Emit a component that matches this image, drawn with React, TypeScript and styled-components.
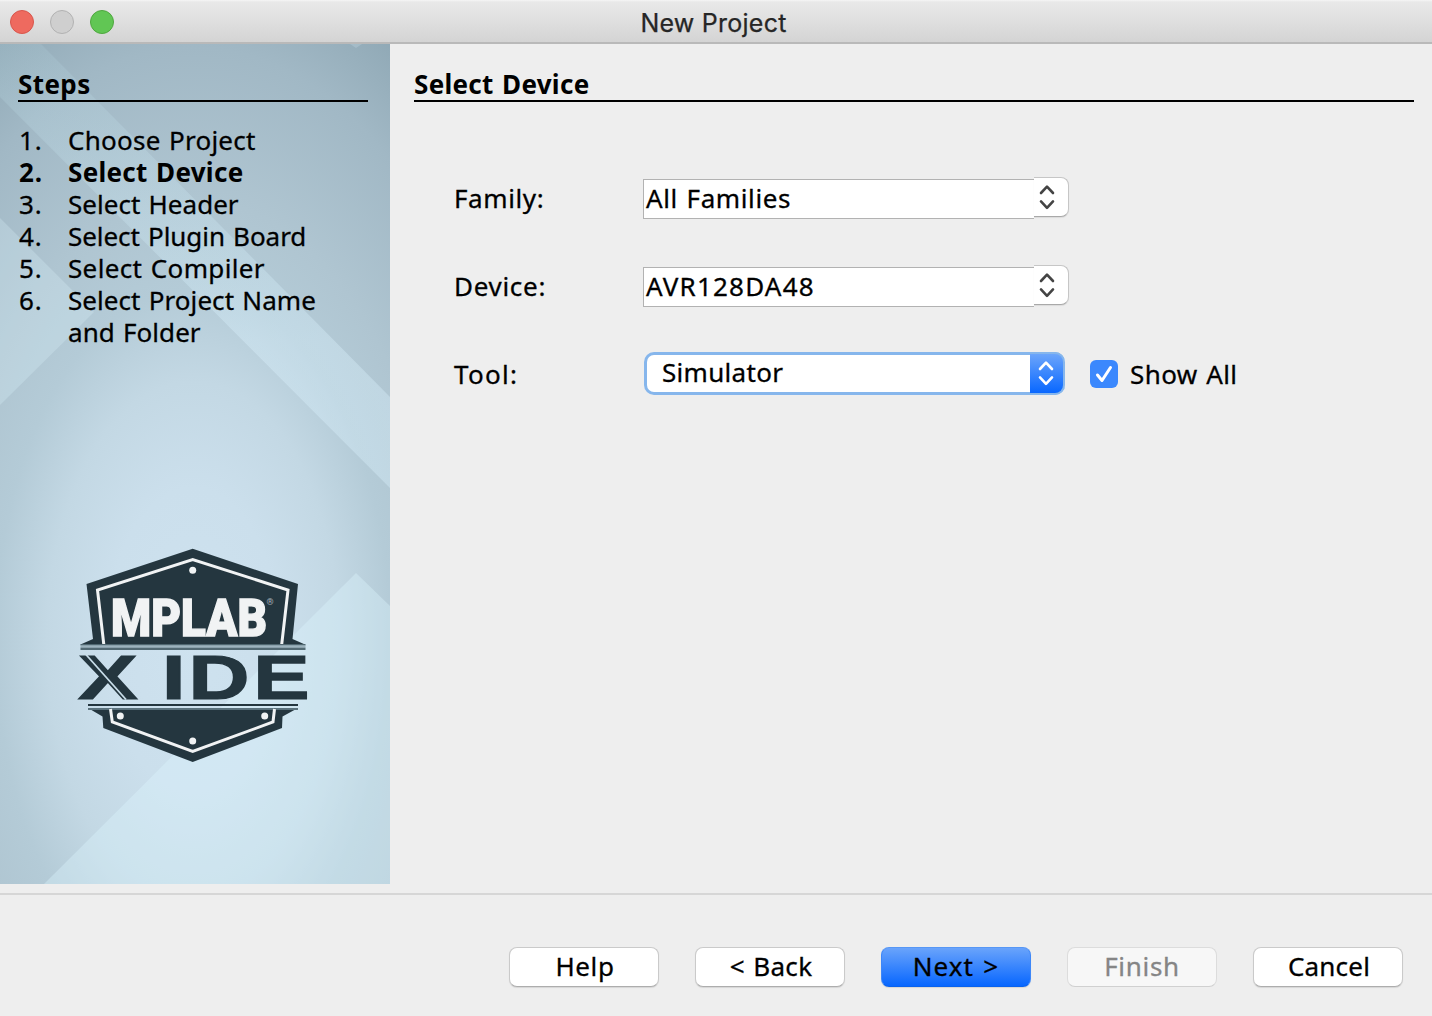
import React from "react";
import styled, { createGlobalStyle, css } from "styled-components";

const GlobalStyle = createGlobalStyle`
  * { box-sizing: border-box; }
  body {
    margin: 0;
    background: #eeeeee;
    color: #000;
    font-family: "Noto Sans", "Open Sans", sans-serif;
    font-size: 26px;
    line-height: 32px;
  }
`;

const Window = styled.div`
  width: 1432px;
  height: 1016px;
  display: flex;
  flex-direction: column;
  overflow: hidden;
  isolation: isolate;
  background: #eeeeee;
`;

const TitleBar = styled.header`
  height: 44px;
  flex: none;
  display: grid;
  grid-template-columns: 200px 1fr 200px;
  align-items: center;
  background: linear-gradient(#f6f6f6 0, #e9e9e9 2px, #d4d4d4 42px);
  border-bottom: 2px solid #b9b9b9;
`;

const Lights = styled.div`
  display: flex;
  gap: 16px;
  padding: 2px 0 0 10px;
`;

const Light = styled.span<{ $fill: string; $edge: string }>`
  width: 24px;
  height: 24px;
  border-radius: 50%;
  background: ${(p) => p.$fill};
  border: 1px solid ${(p) => p.$edge};
`;

const WindowTitle = styled.h1`
  margin: 0;
  padding: 3px 5px 0 0;
  text-align: center;
  font: 400 25px/32px Inter, Roboto, sans-serif;
  letter-spacing: 0.25px;
  -webkit-text-stroke: 0.25px currentColor;
  color: #262626;
`;

const Body = styled.main`
  display: flex;
  height: 840px;
  flex: none;
`;

const Sidebar = styled.aside`
  position: relative;
  width: 390px;
  padding: 24px 22px 0 18px;
`;

const Backdrop = styled.svg`
  position: absolute;
  inset: 0;
  z-index: -1;
`;

const Heading = styled.h2<{ $spacing: number }>`
  margin: 0;
  height: 34px;
  font-size: 26px;
  line-height: 32px;
  font-weight: 700;
  border-bottom: 2px solid #000;
  letter-spacing: ${(p) => p.$spacing}px;
  word-spacing: 1.4px;
`;

const StepList = styled.ol`
  list-style: none;
  margin: 22px 0 0;
  padding: 0;
`;

const Step = styled.li<{ $current?: boolean }>`
  display: grid;
  grid-template-columns: 50px 1fr;
  font-weight: ${(p) => (p.$current ? 700 : 400)};
  -webkit-text-stroke: ${(p) => (p.$current ? 0 : 0.3)}px currentColor;
`;

const StepNumber = styled.span`
  padding-left: 1px;
  letter-spacing: 0.8px;
`;

const Label = styled.span<{ $spacing: number }>`
  display: block;
  white-space: nowrap;
  letter-spacing: ${(p) => p.$spacing}px;
  word-spacing: 1.4px;
`;

const Badge = styled.svg`
  display: block;
  margin: 187px 0 0 42px;
`;

const Panel = styled.section`
  flex: 1;
  padding: 24px 18px 0 24px;
`;

const Form = styled.div`
  padding: 74px 0 0 39px;
  -webkit-text-stroke: 0.3px currentColor;
`;

const FormRow = styled.div`
  height: 88px;
  display: grid;
  grid-template-columns: 190px 447px auto;
  align-items: start;
`;

const FieldName = styled.div`
  padding: 6px 0 0 1px;
`;

const Editable = styled.div`
  display: flex;
  align-items: flex-start;
  padding-top: 1px;
`;

const EditableValue = styled.div`
  width: 391px;
  height: 40px;
  margin-top: 2px;
  padding: 2px 0 0 2px;
  background: #fff;
  border: 1px solid #b2b2b2;
  border-right: 0;
`;

const Stepper = styled.div`
  width: 35px;
  height: 40px;
  display: flex;
  align-items: center;
  padding-left: 4px;
  background: #fff;
  border: 1px solid #c6c6c6;
  border-left: 0;
  border-bottom-color: #a9a9a9;
  border-radius: 0 8px 8px 0;
  box-shadow: 0 1px 1px rgba(0, 0, 0, 0.08);
`;

const Popup = styled.div`
  width: 421px;
  height: 43px;
  margin-left: 1px;
  display: flex;
  background: #fff;
  border: 3px solid #86b6ec;
  border-right: 0;
  border-radius: 10px;
`;

const PopupValue = styled.div`
  flex: 1;
  padding: 1px 0 0 15px;
`;

const PopupArrow = styled.div`
  width: 35px;
  height: 43px;
  margin-top: -3px;
  display: flex;
  align-items: center;
  padding: 0 0 1px 7px;
  background: linear-gradient(#6ca5fb, #0867ff);
  border: solid #86b6ec;
  border-width: 2px 2px 2px 0;
  border-radius: 0 10px 10px 0;
`;

const CheckRow = styled.label`
  display: flex;
  gap: 12px;
  padding-top: 6px;
`;

const CheckBox = styled.span`
  width: 28px;
  height: 28px;
  margin-top: 2px;
  border-radius: 6px;
  background: #3b88fd;
  display: block;
`;

const Footer = styled.footer`
  margin-top: 9px;
  height: 123px;
  border-top: 2px solid #d6d6d6;
  padding: 52px 29px 0 0;
  display: flex;
  justify-content: flex-end;
  gap: 36px;
`;

const Button = styled.button<{ $tone?: "primary" | "disabled"; $spacing: number }>`
  width: 150px;
  height: 40px;
  padding: 0 0 1px 2px;
  font: inherit;
  line-height: 37px;
  letter-spacing: ${(p) => p.$spacing}px;
  word-spacing: 1.4px;
  -webkit-text-stroke: 0.3px currentColor;
  color: #000;
  background: #fff;
  border: 1px solid #cacaca;
  border-bottom-color: #adadad;
  border-radius: 8px;
  box-shadow: 0 1px 1px rgba(0, 0, 0, 0.1);
  ${(p) =>
    p.$tone === "primary" &&
    css`
      padding-left: 0;
      background: linear-gradient(#6ca5fb, #0565ff) border-box;
      border-color: #5797f5 #3d87f8 #0a62ed;
    `}
  ${(p) =>
    p.$tone === "disabled" &&
    css`
      padding-left: 0;
      background: #f7f7f7;
      color: #858585;
      border-color: #dcdcdc #dcdcdc #d0d0d0;
      box-shadow: none;
    `}
`;

const steps = [
  { lines: ["Choose Project"], spacing: [0.25] },
  { lines: ["Select Device"], spacing: [0.3], current: true },
  { lines: ["Select Header"], spacing: [0.03] },
  { lines: ["Select Plugin Board"], spacing: [-0.05] },
  { lines: ["Select Compiler"], spacing: [0.35] },
  { lines: ["Select Project Name", "and Folder"], spacing: [0.06, 0.05] },
];

function Chevrons({ color }: { color: string }) {
  return (
    <svg width="18" height="28" viewBox="0 0 18 28" fill="none" stroke={color} strokeWidth="2.6" strokeLinecap="round" strokeLinejoin="round">
      <path d="M3 10 L9 3.6 L15 10 M3 18.4 L9 24.8 L15 18.4" />
    </svg>
  );
}

function SidebarBackdrop() {
  return (
    <Backdrop width="390" height="840" viewBox="0 44 390 840" aria-hidden>
      <defs>
        <radialGradient id="glow" gradientUnits="userSpaceOnUse" cx="0" cy="0" r="1" gradientTransform="translate(193 640) scale(430 760)">
          <stop offset="0" stopColor="#cee2ef" />
          <stop offset="0.2" stopColor="#cbdfec" />
          <stop offset="0.34" stopColor="#c3d8e4" />
          <stop offset="0.46" stopColor="#b4cbd7" />
          <stop offset="0.58" stopColor="#afc5d1" />
          <stop offset="0.78" stopColor="#a1b8c5" />
          <stop offset="0.92" stopColor="#8fa8b5" />
        </radialGradient>
        <linearGradient id="beam" gradientUnits="userSpaceOnUse" x1="0" y1="44" x2="0" y2="340">
          <stop offset="0" stopColor="#c8ecf5" stopOpacity="0.12" />
          <stop offset="1" stopColor="#dcf3ff" stopOpacity="0.36" />
        </linearGradient>
      </defs>
      <rect y="44" width="390" height="840" fill="url(#glow)" />
      <path fill="url(#beam)" d="M0 44H41L390 397V488L0 97Z" />
      <g fill="#dff6ff">
        <path fillOpacity="0.25" d="M0 218L94 312L0 405Z" />
        <path fillOpacity="0.36" d="M356 573L390 606V884H44Z" />
        <path fillOpacity="0.2" d="M350 44L356 48L362 44Z" />
      </g>
    </Backdrop>
  );
}

function MplabBadge() {
  const ink = "#24363f";
  return (
    <Badge width="270" height="240" viewBox="0 0 270 240">
      <path fill={ink} d="M132.7 13.7L238 49L232.5 104L245 109.5H20.5L33 104L26.5 49Z" />
      <path fill="none" stroke="#f1f3f4" strokeWidth="3" d="M43.8 109.5L37.5 55L132.7 24.5L228 55L221.7 109.5" />
      <rect x="20.5" y="109" width="225" height="1.6" fill="#4f6670" />
      <rect x="20.5" y="110.6" width="225" height="2" fill="#9db3be" />
      <rect x="20.5" y="112.6" width="225" height="2.4" fill="#536a74" />
      <circle cx="132.7" cy="35.3" r="3.5" fill="#f1f3f4" />
      <text x="51" y="100.5" textLength="156" lengthAdjust="spacingAndGlyphs" fontFamily="Roboto, sans-serif" fontWeight="900" fontSize="52" fill="#f1f3f4" stroke="#f1f3f4" strokeWidth="1.4">MPLAB</text>
      <text x="206.5" y="69.5" fontFamily="Roboto, sans-serif" fontSize="9" fontWeight="700" fill="#a3afb5">®</text>
      <g fill={ink} stroke={ink} strokeWidth="1.2" fontFamily="Liberation Sans, Arial, sans-serif" fontWeight="700" fontSize="62.5">
        <text transform="translate(18 163.5) scale(1.43 1)" x="0" y="0">X</text>
        <text transform="translate(0 163.5) scale(1.35 1)" x="75.5 95.2 143.2" y="0">IDE</text>
      </g>
      <path stroke="#c9deea" strokeWidth="1.8" d="M25 118.5L66 164.5" />
      <rect x="28" y="169" width="210" height="2" fill={ink} />
      <path fill={ink} d="M28 173H238L222.5 181.5L222 193L132.7 227L43.3 193L42.5 181.5Z" />
      <rect x="28" y="173" width="210" height="2" fill="#5b727d" />
      <path fill="none" stroke="#f1f3f4" strokeWidth="3" d="M50.5 174L52.3 187L132.7 216.5L213 187L214.5 174" />
      <circle cx="60.3" cy="181" r="3.5" fill="#f1f3f4" />
      <circle cx="204.7" cy="181" r="3.5" fill="#f1f3f4" />
      <circle cx="132.7" cy="206" r="3.5" fill="#f1f3f4" />
    </Badge>
  );
}

function ComboField({ value, spacing }: { value: string; spacing: number }) {
  return (
    <Editable>
      <EditableValue>
        <Label $spacing={spacing}>{value}</Label>
      </EditableValue>
      <Stepper>
        <Chevrons color="#444" />
      </Stepper>
    </Editable>
  );
}

export default function App() {
  return (
    <Window>
      <GlobalStyle />
      <TitleBar>
        <Lights>
          <Light $fill="#ee6a5f" $edge="#d8564c" />
          <Light $fill="#cfcfcf" $edge="#b2b2b2" />
          <Light $fill="#61c654" $edge="#4fa73f" />
        </Lights>
        <WindowTitle>New Project</WindowTitle>
      </TitleBar>
      <Body>
        <Sidebar>
          <SidebarBackdrop />
          <Heading $spacing={0.4}>Steps</Heading>
          <StepList>
            {steps.map((step, i) => (
              <Step key={i} $current={step.current}>
                <StepNumber>{i + 1}.</StepNumber>
                <div>
                  {step.lines.map((line, n) => (
                    <Label key={line} $spacing={step.spacing[n]}>{line}</Label>
                  ))}
                </div>
              </Step>
            ))}
          </StepList>
          <MplabBadge />
        </Sidebar>
        <Panel>
          <Heading $spacing={0.3}>Select Device</Heading>
          <Form>
            <FormRow>
              <FieldName><Label $spacing={0.6}>Family:</Label></FieldName>
              <ComboField value="All Families" spacing={0.6} />
            </FormRow>
            <FormRow>
              <FieldName><Label $spacing={0.7}>Device:</Label></FieldName>
              <ComboField value="AVR128DA48" spacing={1.2} />
            </FormRow>
            <FormRow>
              <FieldName><Label $spacing={1.3}>Tool:</Label></FieldName>
              <Popup>
                <PopupValue><Label $spacing={0.3}>Simulator</Label></PopupValue>
                <PopupArrow><Chevrons color="#fff" /></PopupArrow>
              </Popup>
              <CheckRow>
                <CheckBox>
                  <svg width="28" height="28" viewBox="0 0 28 28" fill="none" stroke="#fff" strokeWidth="3" strokeLinecap="round" strokeLinejoin="round">
                    <path d="M7.5 15L12 20.5L20.5 7.5" />
                  </svg>
                </CheckBox>
                <Label $spacing={0.4}>Show All</Label>
              </CheckRow>
            </FormRow>
          </Form>
        </Panel>
      </Body>
      <Footer>
        <Button $spacing={0.6}>Help</Button>
        <Button $spacing={0.3}>&lt; Back</Button>
        <Button $spacing={1.1} $tone="primary">Next &gt;</Button>
        <Button $spacing={0.7} $tone="disabled">Finish</Button>
        <Button $spacing={0.2}>Cancel</Button>
      </Footer>
    </Window>
  );
}
